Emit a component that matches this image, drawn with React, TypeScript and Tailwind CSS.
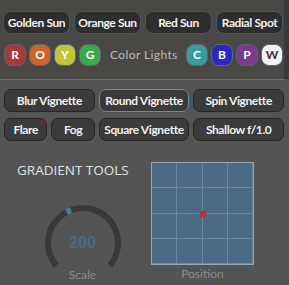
import React from 'react'

const sunPresets = ['Golden Sun', 'Orange Sun', 'Red Sun', 'Radial Spot']

const warmLights = [
  { letter: 'R', bg: 'bg-[#a8383c]' },
  { letter: 'O', bg: 'bg-[#d0652c]' },
  { letter: 'Y', bg: 'bg-[#c4c23c]' },
  { letter: 'G', bg: 'bg-[#3aa84c]' },
]

const coolLights = [
  { letter: 'C', bg: 'bg-[#3a9c9e]', text: 'text-white' },
  { letter: 'B', bg: 'bg-[#2a28c0]', text: 'text-white' },
  { letter: 'P', bg: 'bg-[#7a3a8e]', text: 'text-white' },
  { letter: 'W', bg: 'bg-[#eef2f6]', text: 'text-[#333]' },
]

const font = { fontFamily: 'Lato, "Open Sans", sans-serif' }

function SunButton({ label }: { label: string }) {
  return (
    <button className="h-[23px] rounded-[8px] border border-[#41596b] bg-[#2e2e2e] text-[12px] font-bold text-[#f2f2f2] tracking-[-0.4px]">
      {label}
    </button>
  )
}

function LightChip({ letter, bg, text = 'text-white' }: { letter: string; bg: string; text?: string }) {
  return (
    <div className={`flex h-[22px] w-[22px] items-center justify-center rounded-[8px] border border-[#586878] ${bg} ${text} text-[12px] font-bold`}>
      {letter}
    </div>
  )
}

function FxButton({ label, active, flag, span }: { label: string; active?: boolean; flag?: boolean; span?: boolean }) {
  return (
    <button
      className={`relative h-[23px] overflow-hidden rounded-[7px] border bg-[#3b3b3b] text-[12px] font-bold text-[#f0f0f0] tracking-[-0.4px] ${
        active ? 'border-[#5c8fb4]' : 'border-[#262626]'
      } ${span ? 'col-span-2' : ''}`}
    >
      {label}
      {/* small red corner marker */}
      {flag && (
        <span className="absolute right-0 top-0 h-0 w-0 border-l-[7px] border-t-[7px] border-l-transparent border-t-[#8a1f22]" />
      )}
    </button>
  )
}

function ScaleDial({ value }: { value: number }) {
  const cx = 40
  const cy = 40
  const r = 35
  const pt = (deg: number) => {
    const a = ((deg - 90) * Math.PI) / 180
    return [cx + r * Math.cos(a), cy + r * Math.sin(a)]
  }
  const [sx, sy] = pt(-130)
  const [ex, ey] = pt(130)
  const [ix, iy] = pt(-28)
  const [jx, jy] = pt(-20)
  return (
    <div className="relative h-[68px] w-[80px]">
      <svg width="80" height="68" viewBox="0 0 80 68">
        <path d={`M ${sx} ${sy} A ${r} ${r} 0 1 1 ${ex} ${ey}`} fill="none" stroke="#393939" strokeWidth="6" />
        <path d={`M ${ix} ${iy} A ${r} ${r} 0 0 1 ${jx} ${jy}`} fill="none" stroke="#4d7e9e" strokeWidth="6" />
      </svg>
      <div
        className="absolute left-0 top-[30px] w-[80px] text-center text-[16px] font-bold leading-[20px] text-[#4a6a82]"
        style={{ fontFamily: 'Roboto, sans-serif' }}
      >
        {value}
      </div>
    </div>
  )
}

function PositionPad() {
  return (
    <div className="relative grid h-[103px] w-[103px] grid-cols-4 grid-rows-4 border border-[#9aa6b2] bg-[#4b6a86]">
      {Array.from({ length: 16 }).map((_, i) => (
        <div key={i} className="border-b border-r border-[#6a879f]" />
      ))}
      <span className="absolute left-1/2 top-[50%] h-[7px] w-[7px] -translate-x-1/2 -translate-y-1/2 rounded-full bg-[#b8303c]" />
    </div>
  )
}

export default function App() {
  return (
    <div className="h-[285px] w-[289px] overflow-hidden bg-[#545454]" style={font}>
      <div className="flex h-[79px] bg-[#3a3a3a]">
        <div className="w-[284px] bg-[#4a4845] pl-[3px] pr-[1px] pt-[11px]">
          <div className="grid grid-cols-4 gap-[4px]">
            {sunPresets.map((p) => (
              <SunButton key={p} label={p} />
            ))}
          </div>
          <div className="mt-[10px] flex items-center pl-[1px]">
            <div className="flex gap-[3px]">
              {warmLights.map((l) => (
                <LightChip key={l.letter} letter={l.letter} bg={l.bg} />
              ))}
            </div>
            <span className="ml-[9px] text-[12px] tracking-[0.4px] text-[#b9b9b9]">Color Lights</span>
            <div className="ml-auto flex gap-[3px]">
              {coolLights.map((l) => (
                <LightChip key={l.letter} letter={l.letter} bg={l.bg} text={l.text} />
              ))}
            </div>
          </div>
        </div>
      </div>
      <div className="h-px w-[284px] bg-[#6e6e6e]" />

      <div className="px-[4px] pt-[9px] pr-[5px]">
        <div className="grid grid-cols-6 gap-x-[4px] gap-y-[6px]">
          <FxButton label="Blur Vignette" span />
          <FxButton label="Round Vignette" span active />
          <FxButton label="Spin Vignette" span />
          <FxButton label="Flare" flag />
          <FxButton label="Fog" />
          <FxButton label="Square Vignette" span />
          <FxButton label="Shallow f/1.0" span />
        </div>
      </div>

      <div className="mt-[22px] flex">
        <div className="flex w-[151px] flex-col">
          <div className="pl-[17px] text-[13.5px] leading-[14px] text-[#e2e2e2]" style={{ fontFamily: '"Open Sans", sans-serif' }}>
            GRADIENT TOOLS
          </div>
          <div className="mt-[26px] flex justify-center pl-[14px]">
            <ScaleDial value={200} />
          </div>
          <div className="-mt-[3px] pl-[14px] text-center text-[12px] leading-[14px] text-[#8c8c8c]">Scale</div>
        </div>
        <div className="flex flex-col items-start">
          <div className="-mt-[1px]">
            <PositionPad />
          </div>
          <div className="mt-[2px] w-[103px] text-center text-[12px] leading-[14px] text-[#8c8c8c]">Position</div>
        </div>
      </div>
    </div>
  )
}
